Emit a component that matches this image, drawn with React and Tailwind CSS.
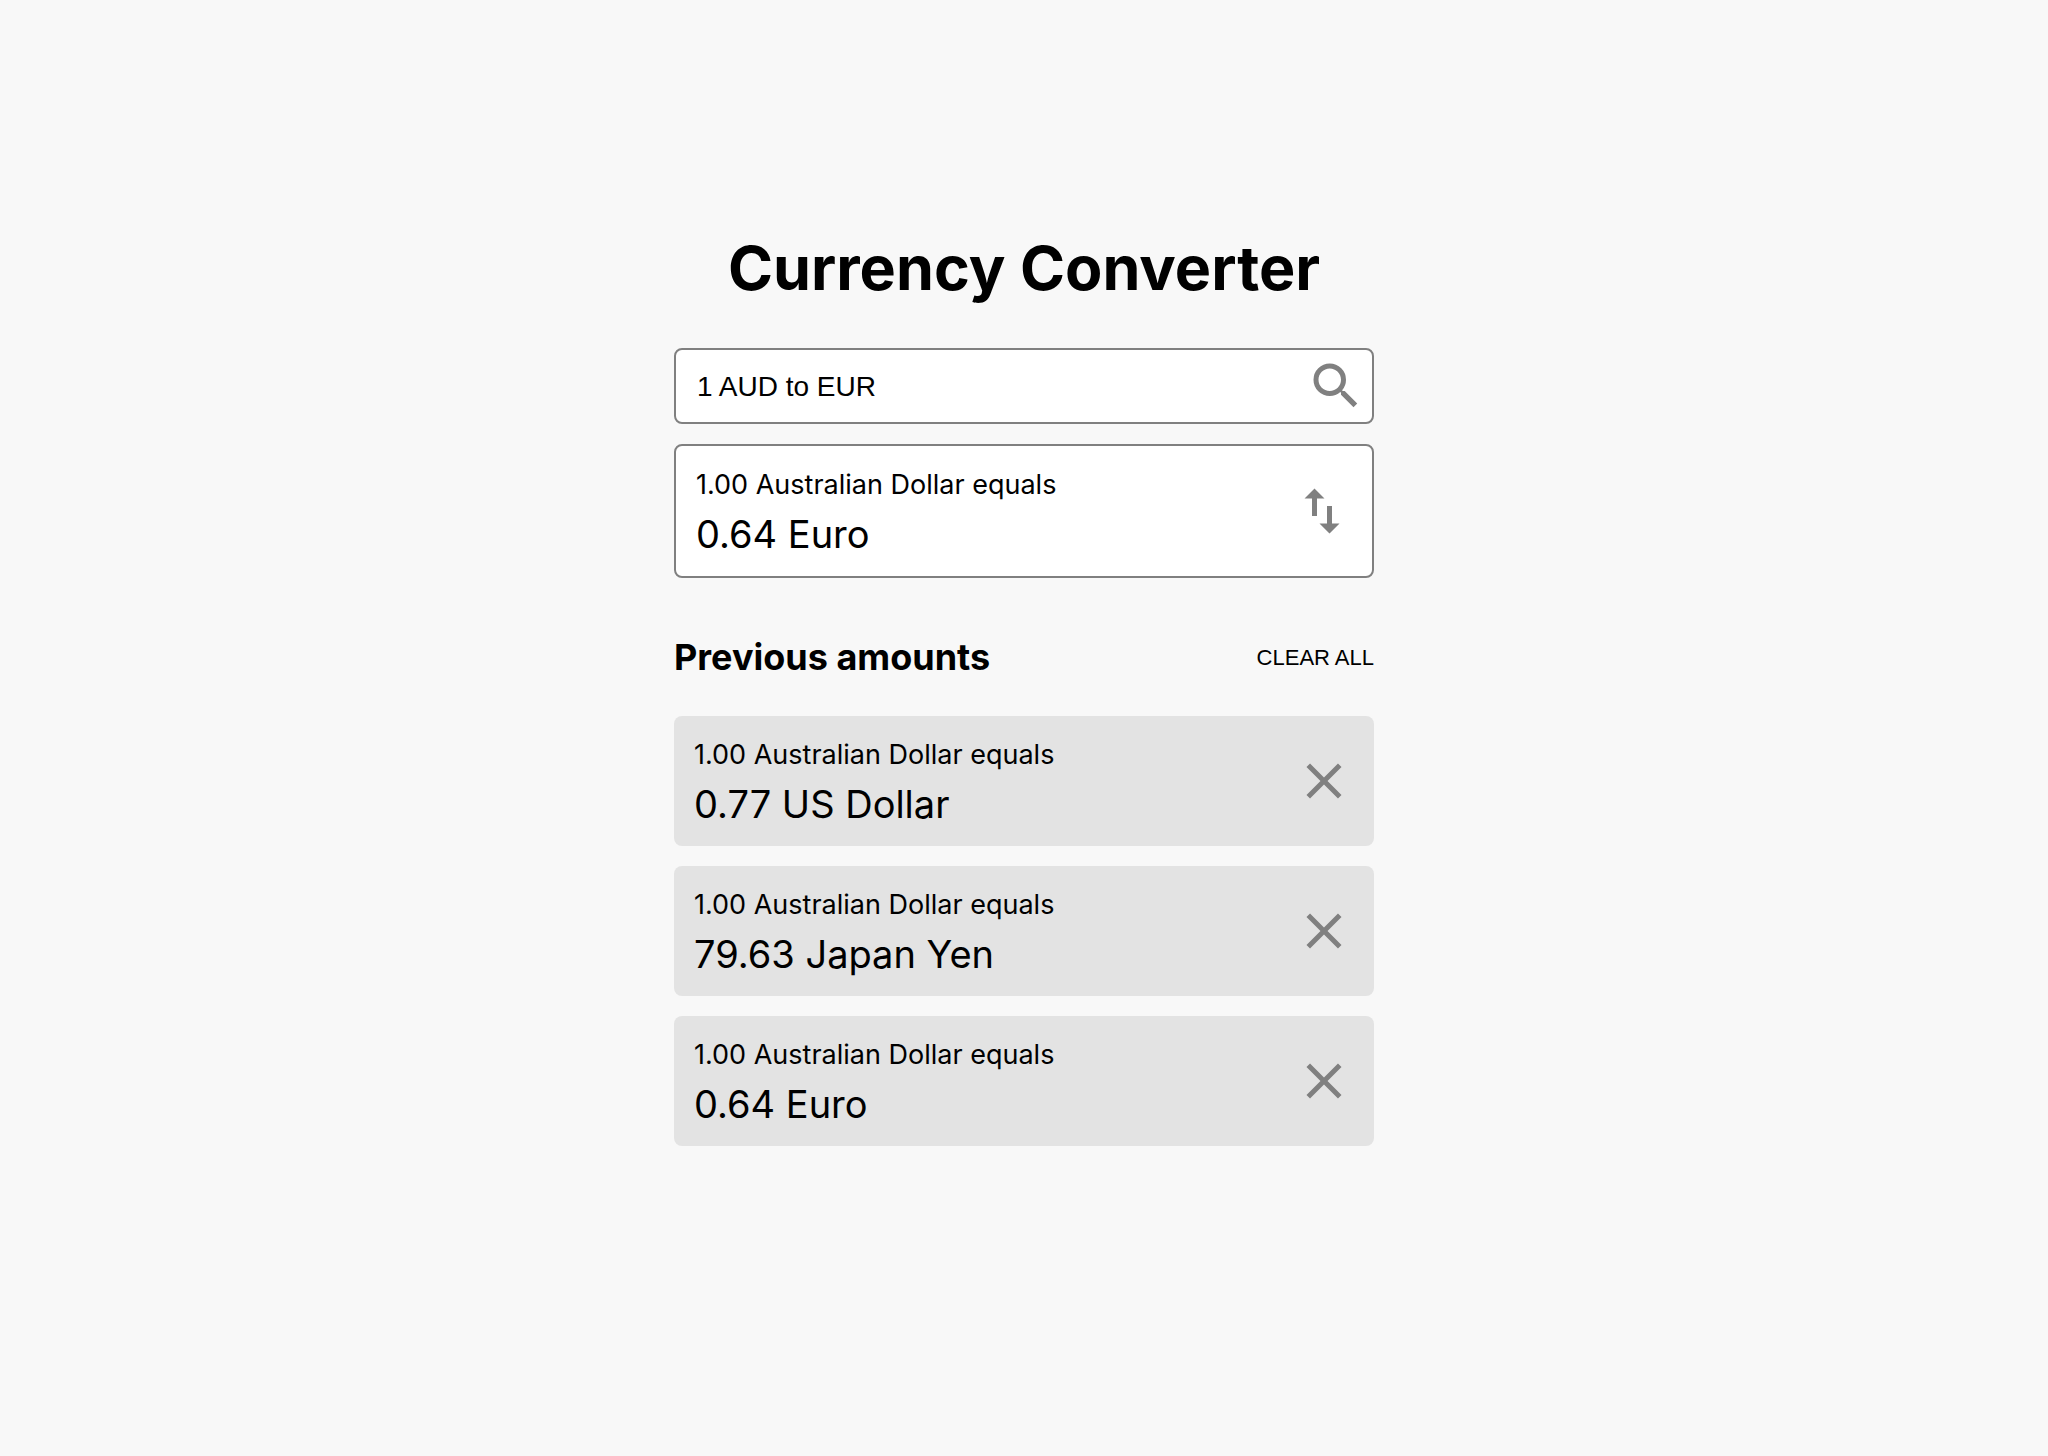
import { useState } from "react";
import { MdClose, MdImportExport, MdSearch } from "react-icons/md";

const initialAmounts = [
  { id: 1, from: "1.00 Australian Dollar equals", to: "0.77 US Dollar" },
  { id: 2, from: "1.00 Australian Dollar equals", to: "79.63 Japan Yen" },
  { id: 3, from: "1.00 Australian Dollar equals", to: "0.64 Euro" },
];

function Amount({ from, to }) {
  return (
    <div className="flex flex-col gap-2">
      <p className="text-[27px] leading-[38px]">{from}</p>
      <p className="text-[38px] leading-[44px]">{to}</p>
    </div>
  );
}

export default function App() {
  const [query, setQuery] = useState("1 AUD to EUR");
  const [amounts, setAmounts] = useState(initialAmounts);

  return (
    <div className="min-h-screen bg-[#f8f8f8] px-5 pt-[230px] pb-20 font-['Inter',sans-serif] text-black">
      <main className="mx-auto w-full max-w-[700px]">
        <h1 className="text-center text-[61px] leading-[76px] font-bold">Currency Converter</h1>

        <form
          className="mt-[42px] flex items-center rounded-lg border-2 border-[#808080] bg-white pr-1.5"
          onSubmit={(e) => e.preventDefault()}
        >
          <input
            type="text"
            aria-label="Amount and currencies"
            value={query}
            onChange={(e) => setQuery(e.target.value)}
            className="h-[72px] min-w-0 flex-1 bg-transparent pt-0.5 pl-[21px] font-['Liberation_Sans',sans-serif] text-[28px] outline-none"
          />
          <button type="submit" aria-label="Convert" className="text-[#808080]">
            <MdSearch className="size-[60px]" />
          </button>
        </form>

        <section className="mt-5 flex items-center justify-between rounded-lg border-2 border-[#808080] bg-white p-5">
          <Amount from="1.00 Australian Dollar equals" to="0.64 Euro" />
          <button type="button" aria-label="Swap currencies" className="text-[#808080]">
            <MdImportExport className="size-[60px]" />
          </button>
        </section>

        <div className="mt-[57px] flex items-center justify-between">
          <h2 className="text-[36px] leading-[44px] font-bold">Previous amounts</h2>
          <button
            type="button"
            onClick={() => setAmounts([])}
            className="font-['Liberation_Sans',sans-serif] text-[22px] uppercase"
          >
            Clear all
          </button>
        </div>

        <ul className="mt-[37px] flex flex-col gap-5">
          {amounts.map((a) => (
            <li key={a.id} className="flex items-center justify-between rounded-lg bg-[#e3e3e3] p-5">
              <Amount from={a.from} to={a.to} />
              <button
                type="button"
                aria-label={`Remove ${a.to}`}
                onClick={() => setAmounts(amounts.filter((x) => x.id !== a.id))}
                className="text-[#808080]"
              >
                <MdClose className="size-[60px]" />
              </button>
            </li>
          ))}
        </ul>
      </main>
    </div>
  );
}
